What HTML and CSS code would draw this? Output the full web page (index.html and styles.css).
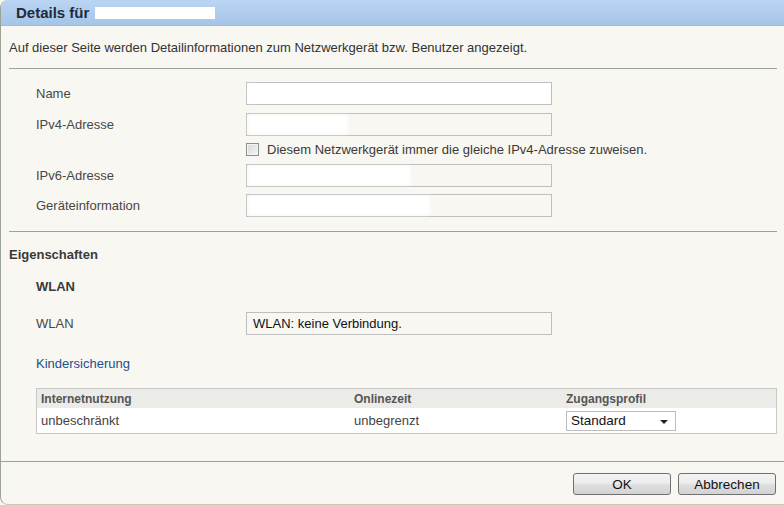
FILE: index.html
```html
<!DOCTYPE html>
<html lang="de">
<head>
<meta charset="utf-8">
<title>Details</title>
<link rel="stylesheet" href="styles.css">
</head>
<body>
<div class="dialog">
  <div class="header">
    <span class="title">Details für</span>
    <span class="title-mask"></span>
  </div>
  <div class="content">
    <p class="intro">Auf dieser Seite werden Detailinformationen zum Netzwerkgerät bzw. Benutzer angezeigt.</p>
    <hr class="sep">
    <div class="form">
      <div class="row r-name">
        <span class="label">Name</span>
        <span class="field white"><span class="blob b1"></span></span>
      </div>
      <div class="row r-ipv4">
        <span class="label">IPv4-Adresse</span>
        <span class="field"><span class="blob b2"></span></span>
      </div>
      <div class="row r-check">
        <span class="label"></span>
        <span class="check-wrap"><span class="checkbox"></span><span class="check-text">Diesem Netzwerkgerät immer die gleiche IPv4-Adresse zuweisen.</span></span>
      </div>
      <div class="row r-ipv6">
        <span class="label">IPv6-Adresse</span>
        <span class="field"><span class="blob b3"></span></span>
      </div>
      <div class="row r-info">
        <span class="label">Geräteinformation</span>
        <span class="field"><span class="blob b4"></span></span>
      </div>
    </div>
    <hr class="sep sep2">
    <h2 class="section">Eigenschaften</h2>
    <h3 class="subsection">WLAN</h3>
    <div class="row r-wlan">
      <span class="label">WLAN</span>
      <span class="field text">WLAN: keine Verbindung.</span>
    </div>
    <div class="kinder">Kindersicherung</div>
    <div class="table">
      <div class="trow thead">
        <span class="c1">Internetnutzung</span>
        <span class="c2">Onlinezeit</span>
        <span class="c3">Zugangsprofil</span>
      </div>
      <div class="trow tbody">
        <span class="c1">unbeschränkt</span>
        <span class="c2">unbegrenzt</span>
        <span class="c3"><span class="select">Standard<span class="arrow"></span></span></span>
      </div>
    </div>
  </div>
  <div class="footer">
    <button class="btn">OK</button>
    <button class="btn">Abbrechen</button>
  </div>
</div>
</body>
</html>
```
FILE: styles.css
```css
html, body {
  margin: 0;
  padding: 0;
  background: #f8f7f2;
}
body {
  width: 784px;
  height: 505px;
  overflow: hidden;
  font-family: "Liberation Sans", Arial, sans-serif;
  font-size: 13px;
  color: #3a3a3a;
}
.dialog {
  box-sizing: border-box;
  height: 505px;
  border-left: 1px solid #9aa396;
  border-bottom: 1px solid #c9cbb4;
  border-radius: 8px 0 0 8px;
  background: #f8f7f2;
  display: flex;
  flex-direction: column;
  overflow: hidden;
}
.header {
  flex: none;
  height: 25px;
  border-bottom: 1px solid #9fbde0;
  background: linear-gradient(#bad5f3, #a5c5e7);
  display: flex;
  align-items: center;
  padding-left: 15px;
  gap: 6px;
}
.title {
  font-weight: bold;
  font-size: 15px;
  color: #1f2b3a;
  line-height: 16px;
}
.title-mask {
  width: 120px;
  height: 12px;
  background: #ffffff;
}
.content {
  padding: 0 7px 0 8px;
  flex: 1;
}
.intro {
  margin: 15px 0 0 0;
  line-height: 14px;
  color: #333;
}
.sep {
  margin: 13px 0 0 0;
  border: 0;
  height: 1px;
  background: #9aa396;
}
.form {
  display: flex;
  flex-direction: column;
}
.row {
  display: flex;
  align-items: center;
  height: 23px;
}
.label {
  width: 210px;
  padding-left: 27px;
  flex: none;
  color: #474747;
}
.r-name { margin-top: 13px; }
.r-ipv4 { margin-top: 8px; }
.r-check { margin-top: 3px; height: 20px; }
.r-ipv6 { margin-top: 5px; }
.r-info { margin-top: 7px; }
.field {
  box-sizing: border-box;
  width: 306px;
  height: 23px;
  border: 1px solid #bebebe;
  background: #f8f7f2;
  display: flex;
  align-items: center;
  padding-left: 3px;
}
.field.white { background: #ffffff; }
.blob {
  height: 15px;
  background: #ffffff;
  box-shadow: 0 0 3px 2px #ffffff;
}
.b1 { width: 4px; }
.b2 { width: 96px; }
.b3 { width: 158px; }
.b4 { width: 178px; }
.check-wrap {
  display: flex;
  align-items: center;
  gap: 8px;
}
.checkbox {
  box-sizing: border-box;
  width: 13px;
  height: 13px;
  border: 1px solid #8e8f8f;
  background: linear-gradient(135deg, #d8d8d8, #f4f4f4);
  box-shadow: inset 0 0 0 1px #f4f4f4;
}
.check-text {
  color: #3a3a3a;
}
.sep2 { margin-top: 14px; }
.section {
  margin: 15px 0 0 0;
  font-size: 13px;
  line-height: 16px;
  font-weight: bold;
  color: #3a3a3a;
}
.subsection {
  margin: 16px 0 0 27px;
  font-size: 13px;
  line-height: 16px;
  font-weight: bold;
  color: #3a3a3a;
}
.r-wlan { margin-top: 17px; }
.field.text {
  padding-left: 6px;
  color: #111;
}
.kinder {
  margin: 21px 0 0 27px;
  line-height: 16px;
  color: #1c4f8c;
}
.table {
  margin: 16px 0 0 27px;
  border: 1px solid #c8c8c8;
}
.trow {
  display: flex;
  align-items: center;
}
.thead {
  height: 19px;
  background: #ebebe8;
  font-weight: bold;
  font-size: 12px;
  color: #555;
}
.tbody {
  height: 25px;
  background: #ffffff;
  color: #444;
}
.c1 { width: 313px; padding-left: 4px; flex: none; }
.c2 { width: 212px; flex: none; }
.c3 { flex: 1; }
.select {
  box-sizing: border-box;
  width: 110px;
  height: 20px;
  border: 1px solid #bdbdbd;
  background: #ffffff;
  display: flex;
  align-items: center;
  padding-left: 4px;
  font-size: 13.5px;
  color: #111;
  position: relative;
}
.arrow {
  position: absolute;
  right: 7px;
  top: 8px;
  width: 0;
  height: 0;
  border-left: 4px solid transparent;
  border-right: 4px solid transparent;
  border-top: 4px solid #222;
}
.footer {
  box-sizing: border-box;
  flex: none;
  height: 43px;
  border-top: 1px solid #9aa396;
  display: flex;
  justify-content: flex-end;
  align-items: flex-start;
  gap: 7px;
  padding: 11px 8px 0 0;
}
.btn {
  box-sizing: border-box;
  width: 98px;
  height: 22px;
  border: 1px solid #707070;
  border-radius: 3px;
  background: linear-gradient(#f4f4f4 0%, #ececec 45%, #dedede 55%, #d3d3d3 100%);
  font-family: "Liberation Sans", Arial, sans-serif;
  font-size: 13.5px;
  color: #111;
  padding: 0;
}
```
